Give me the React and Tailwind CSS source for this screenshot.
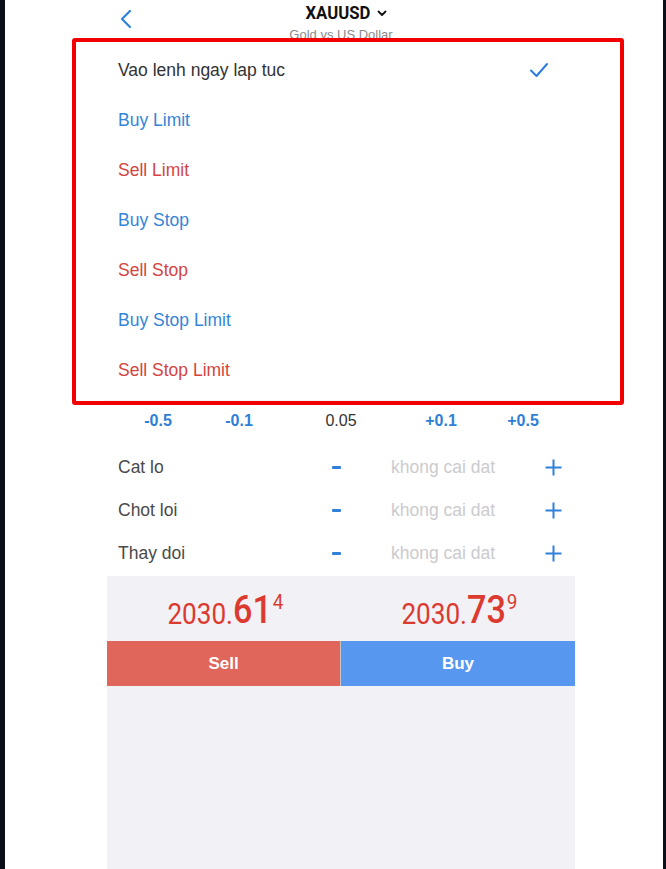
import { useState } from "react";

const orderTypes = [
  { label: "Vao lenh ngay lap tuc", color: "text-[#333333]", checked: true },
  { label: "Buy Limit", color: "text-[#3485d8]" },
  { label: "Sell Limit", color: "text-[#d4453f]" },
  { label: "Buy Stop", color: "text-[#3485d8]" },
  { label: "Sell Stop", color: "text-[#d4453f]" },
  { label: "Buy Stop Limit", color: "text-[#3485d8]" },
  { label: "Sell Stop Limit", color: "text-[#d4453f]" },
];

const steps = [
  { label: "-0.5", blue: true },
  { label: "-0.1", blue: true },
  { label: "0.05", blue: false },
  { label: "+0.1", blue: true },
  { label: "+0.5", blue: true },
];

const levels = ["Cat lo", "Chot loi", "Thay doi"];

function Price({ base, big, sup }) {
  return (
    <div className="flex items-start text-[#dc3a2f] font-['Roboto',sans-serif] scale-x-[0.9]">
      <span className="text-[29px] leading-none mt-[9px]">{base}</span>
      <span className="text-[38px] leading-none font-medium">{big}</span>
      <span className="text-[21px] leading-none mt-[1px] ml-[1px]">{sup}</span>
    </div>
  );
}

const App = () => {
  const [selected] = useState(0);

  return (
    <div className="w-[666px] h-[869px] flex bg-white overflow-hidden font-['Liberation_Sans',Arial,sans-serif]">
      <div className="w-[5px] h-full bg-[#0a0e18]" />

      <div className="flex-1 h-full pl-[14px] flex flex-col">
        {/* Nav bar */}
        <div className="h-[38px] overflow-hidden grid grid-cols-[1fr_auto_1fr] shrink-0">
          <div className="pl-[100px] pt-[9px]">
            <svg width="14" height="20" viewBox="0 0 14 20" fill="none" stroke="#2f80d9" strokeWidth="2.2" strokeLinecap="round" strokeLinejoin="round">
              <path d="M11 2 L3 10 L11 18" />
            </svg>
          </div>
          <div className="flex flex-col items-center pt-[2px]">
            <div className="flex items-center gap-[2px] pl-[6px]">
              <span className="text-[19px] leading-[22px] font-bold text-[#111] font-['Roboto',sans-serif] scale-x-[0.88]">XAUUSD</span>
              <svg width="10" height="7" viewBox="0 0 10 7" fill="none" stroke="#111" strokeWidth="1.8" strokeLinecap="round" strokeLinejoin="round">
                <path d="M1.5 1.5 L5 5 L8.5 1.5" />
              </svg>
            </div>
            <span className="text-[13px] text-[#8a8a8e] leading-none mt-[4px]">Gold vs US Dollar</span>
          </div>
          <div />
        </div>

        {/* Order type menu */}
        <div className="ml-[53px] w-[552px] h-[367px] border-[4px] border-[#f20000] rounded-[3px] bg-white shrink-0">
          <div className="mx-[28px] h-full pt-[3px] border-b border-[#f4f4f6]">
            {orderTypes.map((o, i) => (
              <div key={o.label} className="h-[50px] flex items-center justify-between pl-[14px] pr-[43px]">
                <span className={`text-[17.5px] ${o.color}`}>{o.label}</span>
                {i === selected && (
                  <svg width="20" height="16" viewBox="0 0 20 16" fill="none" stroke="#2a7ddf" strokeWidth="2" strokeLinecap="round" strokeLinejoin="round">
                    <path d="M2 8.5 L7.5 14 L18 2" />
                  </svg>
                )}
              </div>
            ))}
          </div>
        </div>

        {/* Lower form */}
        <div className="w-[468px] mx-auto flex flex-col flex-1">
          <div className="h-[32px] ml-[10px] grid grid-cols-[82px_80px_124px_76px_88px] items-center">
            {steps.map((s) => (
              <span
                key={s.label}
                className={`text-center text-[16px] ${s.blue ? "text-[#2f7fd6] font-bold" : "text-[#333]"}`}
              >
                {s.label}
              </span>
            ))}
          </div>

          <div className="mt-[9px]">
            {levels.map((l) => (
              <div key={l} className="h-[43px] flex items-center pl-[11px]">
                <span className="w-[214px] text-[17.5px] text-[#4a4a4a]">{l}</span>
                <span className="w-[9px] h-[3px] bg-[#2f80d9] rounded-[1px]" />
                <span className="ml-[50px] w-[106px] text-[17.5px] text-[#cbcbce] whitespace-nowrap">khong cai dat</span>
                <svg className="ml-[48px]" width="17" height="17" viewBox="0 0 17 17" stroke="#2f80d9" strokeWidth="2">
                  <path d="M8.5 0.5 V16.5 M0.5 8.5 H16.5" />
                </svg>
              </div>
            ))}
          </div>

          <div className="mt-[1px] flex-1 bg-[#f2f1f5] flex flex-col">
            <div className="h-[65px] grid grid-cols-2">
              <div className="flex justify-center pt-[15px] pl-[2px]">
                <Price base="2030." big="61" sup="4" />
              </div>
              <div className="flex justify-center pt-[15px] pl-[2px]">
                <Price base="2030." big="73" sup="9" />
              </div>
            </div>
            <div className="h-[45px] grid grid-cols-2">
              <button className="bg-[#e0655a] text-white text-[17px] font-bold border-r border-[#c9c3c3]">Sell</button>
              <button className="bg-[#5797ef] text-white text-[17px] font-bold">Buy</button>
            </div>
          </div>
        </div>
      </div>

      <div className="w-[3px] h-full bg-[#0a0e18]" />
    </div>
  );
};

export default App;
